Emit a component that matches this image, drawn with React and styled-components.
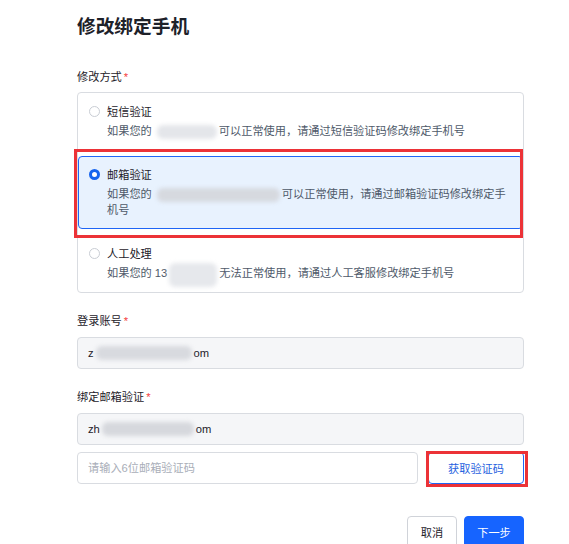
import React from "react";
import styled, { createGlobalStyle } from "styled-components";

const Global = createGlobalStyle`
  html, body { margin: 0; padding: 0; background: #ffffff; }
  body { font-family: "Liberation Sans", "Noto Sans CJK SC", sans-serif; }
  * { box-sizing: border-box; }
`;

const Page = styled.div`
  position: relative;
  width: 569px;
  height: 544px;
  overflow: hidden;
  padding-left: 77px;
`;

const Column = styled.div`
  width: 447px;
  display: flex;
  flex-direction: column;
`;

const Title = styled.h1`
  margin: 14px 0 0;
  font-size: 18.7px;
  line-height: 26px;
  font-weight: 700;
  color: #1d2129;
`;

const Label = styled.div`
  margin-top: ${(p) => p.$top}px;
  font-size: 11.2px;
  line-height: 16px;
  color: #1d2129;
  display: flex;
  align-items: center;
`;

const Star = styled.span`
  color: #f53f3f;
  margin-left: 2px;
`;

const Group = styled.div`
  margin-top: 7px;
  border: 1px solid #d9dce1;
  border-radius: 4px;
  display: flex;
  flex-direction: column;
  gap: 6px;
`;

const Option = styled.div`
  position: relative;
  border: 1px solid ${(p) => (p.$active ? "#1f65f5" : "transparent")};
  background: ${(p) => (p.$active ? "#e8f2fe" : "transparent")};
  border-radius: 4px;
  padding: 7px 12px 10px 10px;
`;

const OptionHead = styled.div`
  display: flex;
  align-items: center;
  gap: 7px;
  height: 20px;
  font-size: 11.2px;
  color: #1d2129;
`;

const Radio = styled.span`
  width: 11px;
  height: 11px;
  border-radius: 50%;
  flex: none;
  background: #fff;
  border: ${(p) => (p.$on ? "3.5px solid #1765ee" : "1px solid #c9cdd4")};
`;

const Desc = styled.div`
  margin-top: 2px;
  padding-left: 18px;
  font-size: 11.2px;
  line-height: 16px;
  color: #4e5969;
`;

const Smudge = styled.span`
  display: inline-block;
  vertical-align: middle;
  width: ${(p) => p.$w}px;
  height: 14px;
  position: relative;
  &::after {
    content: "";
    position: absolute;
    left: 2px;
    right: 2px;
    top: ${(p) => (p.$tall ? -4 : 0)}px;
    bottom: ${(p) => (p.$tall ? -6 : 0)}px;
    background: ${(p) => p.$c || "#dcdee3"};
    border-radius: 6px;
    filter: blur(2px);
  }
`;

const Field = styled.div`
  margin-top: ${(p) => p.$top}px;
  height: 32px;
  border: 1px solid #d9dce1;
  border-radius: 4px;
  background: #f5f6f8;
  padding: 0 10px;
  display: flex;
  align-items: center;
  font-size: 11.2px;
  color: #1d2129;
`;

const CodeRow = styled.div`
  margin-top: 7px;
  display: flex;
  gap: 10px;
`;

const CodeInput = styled.input`
  flex: 1;
  height: 32px;
  border: 1px solid #d9dce1;
  border-radius: 4px;
  background: #fff;
  padding: 0 10px;
  font-family: inherit;
  font-size: 11.2px;
  color: #1d2129;
  outline: none;
  &::placeholder { color: #a9aeb8; }
`;

const Button = styled.button`
  position: relative;
  height: 32px;
  width: ${(p) => p.$w}px;
  border-radius: 4px;
  font-family: inherit;
  font-size: 11.2px;
  padding: 0;
  cursor: pointer;
  border: 1px solid ${(p) => (p.$variant === "primary" ? "#1664ff" : p.$variant === "link" ? "#1f65f5" : "#d0d3d9")};
  background: ${(p) => (p.$variant === "primary" ? "#1664ff" : "#fff")};
  color: ${(p) => (p.$variant === "primary" ? "#fff" : p.$variant === "link" ? "#1f5fe0" : "#1d2129")};
`;

const Footer = styled.div`
  margin-top: 32px;
  display: flex;
  justify-content: flex-end;
  gap: 7px;
`;

const Mark = styled.span`
  position: absolute;
  top: ${(p) => p.$t}px;
  left: ${(p) => p.$l}px;
  right: ${(p) => p.$r}px;
  bottom: ${(p) => p.$b}px;
  border: 3px solid #ec3237;
  pointer-events: none;
`;

export default function App() {
  return (
    <>
      <Global />
      <Page>
        <Column>
          <Title>修改绑定手机</Title>
          <Label $top={29}>
            修改方式<Star>*</Star>
          </Label>
          <Group>
            <Option>
              <OptionHead>
                <Radio />
                短信验证
              </OptionHead>
              <Desc>
                如果您的 <Smudge $w={64} $c="#e4e6ea" />可以正常使用，请通过短信验证码修改绑定手机号
              </Desc>
            </Option>
            <Option $active>
              <OptionHead>
                <Radio $on />
                邮箱验证
              </OptionHead>
              <Desc>
                如果您的 <Smudge $w={127} $c="#d6d9df" />可以正常使用，请通过邮箱验证码修改绑定手机号
              </Desc>
              <Mark $t={-8} $l={-5} $r={-1} $b={-10} />
            </Option>
            <Option>
              <OptionHead>
                <Radio />
                人工处理
              </OptionHead>
              <Desc>
                如果您的 13<Smudge $w={52} $c="#e6e8ec" $tall />无法正常使用，请通过人工客服修改绑定手机号
              </Desc>
            </Option>
          </Group>

          <Label $top={20}>
            登录账号<Star>*</Star>
          </Label>
          <Field $top={8}>
            z<Smudge $w={100} $c="#d8dadf" />om
          </Field>

          <Label $top={20}>
            绑定邮箱验证<Star>*</Star>
          </Label>
          <Field $top={8}>
            zh<Smudge $w={96} $c="#d6d8dd" />om
          </Field>
          <CodeRow>
            <CodeInput placeholder="请输入6位邮箱验证码" />
            <Button $variant="link" $w={96}>
              获取验证码
              <Mark $t={-2} $l={-3} $r={-5} $b={-4} />
            </Button>
          </CodeRow>

          <Footer>
            <Button $w={50}>取消</Button>
            <Button $variant="primary" $w={60}>下一步</Button>
          </Footer>
        </Column>
      </Page>
    </>
  );
}
